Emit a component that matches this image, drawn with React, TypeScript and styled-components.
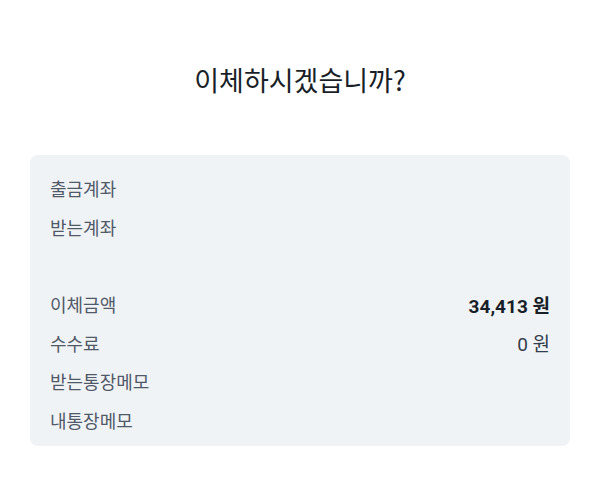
import React from "react";
import styled, { createGlobalStyle } from "styled-components";

interface Row {
  label: string;
  value?: string;
  strong?: boolean;
}

const rows: Row[] = [
  { label: "출금계좌" },
  { label: "받는계좌" },
  { label: "" },
  { label: "이체금액", value: "34,413 원", strong: true },
  { label: "수수료", value: "0 원" },
  { label: "받는통장메모" },
  { label: "내통장메모" },
];

const App = () => {
  return (
    <>
      <GlobalStyle />
      <Page>
        <Title>이체하시겠습니까?</Title>
        <Card>
          {rows.map((row, i) => (
            <InfoRow key={i}>
              <Label>{row.label}</Label>
              {row.value && <Value $strong={row.strong}>{row.value}</Value>}
            </InfoRow>
          ))}
        </Card>
      </Page>
    </>
  );
};

const GlobalStyle = createGlobalStyle`
  body {
    margin: 0;
    background: #ffffff;
    font-family: "Noto Sans CJK KR", "Noto Sans", sans-serif;
  }
`;

const Page = styled.div`
  width: 600px;
  height: 483px;
  box-sizing: border-box;
  padding: 58px 30px 0;
  display: flex;
  flex-direction: column;
`;

const Title = styled.h1`
  margin: 0;
  height: 44px;
  line-height: 44px;
  font-size: 27px;
  font-weight: 400;
  color: #191f28;
  text-align: center;
`;

const Card = styled.div`
  margin-top: 53px;
  background: #f0f3f6;
  border-radius: 8px;
  padding: 14px 20px 7px;
  display: flex;
  flex-direction: column;
`;

const InfoRow = styled.div`
  height: 38.6px;
  display: flex;
  align-items: center;
  justify-content: space-between;
`;

const Label = styled.span`
  font-size: 18px;
  color: #505967;
`;

const Value = styled.span<{ $strong?: boolean }>`
  font-family: Roboto, "Noto Sans CJK KR", sans-serif;
  font-size: 19px;
  font-weight: ${(p) => (p.$strong ? 700 : 400)};
  color: ${(p) => (p.$strong ? "#191f28" : "#333d4b")};
`;

export default App;
